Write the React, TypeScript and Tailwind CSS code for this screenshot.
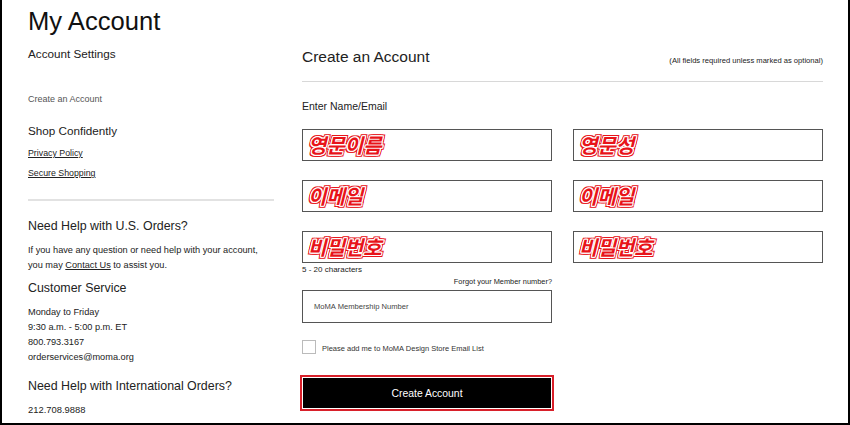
import { useState } from "react";

const koreanFieldClass =
  "inline-block -skew-x-[14deg] font-bold text-[20px] leading-none text-[#e8141a] [text-shadow:1px_0_0_#fff,-1px_0_0_#fff,0_1px_0_#fff,0_-1px_0_#fff,1px_1px_0_#fff,-1px_-1px_0_#fff,1px_-1px_0_#fff,-1px_1px_0_#fff,2px_0_0_#e8141a,-2px_0_0_#e8141a,0_2px_0_#e8141a,0_-2px_0_#e8141a,2px_2px_0_#e8141a,-2px_-2px_0_#e8141a,2px_-2px_0_#e8141a,-2px_2px_0_#e8141a]";

const Field = ({ label }: { label: string }) => (
  <div className="h-[32px] border border-[#555] bg-white flex items-center pl-[7px]">
    <span
      className={koreanFieldClass}
      style={{ fontFamily: '"Noto Sans CJK KR", "Noto Sans", sans-serif' }}
    >
      {label}
    </span>
  </div>
);

const App = () => {
  const [subscribe, setSubscribe] = useState(false);

  return (
    <div
      className="w-[850px] h-[425px] overflow-hidden bg-white border-l-2 border-r-2 border-b-2 border-black text-[#222]"
      style={{ fontFamily: '"Liberation Sans", Arial, sans-serif' }}
    >
      {/* Page title */}
      <div className="pt-[6px] pl-[26px]">
        <h1 className="text-[25.6px] leading-[30px] text-[#111]">My Account</h1>
      </div>

      <div className="flex pl-[26px] gap-[28px]">
        {/* Sidebar */}
        <aside className="w-[246px] flex flex-col">
          <h2 className="mt-[10px] text-[11.7px] leading-[16px]">Account Settings</h2>
          <p className="mt-[30px] text-[9px] leading-[14px] text-[#555]">Create an Account</p>

          <h3 className="mt-[17px] text-[11.7px] leading-[16px]">Shop Confidently</h3>
          <a href="#" className="mt-[8px] text-[8.8px] leading-[13px] underline">
            Privacy Policy
          </a>
          <a href="#" className="mt-[7px] text-[8.8px] leading-[13px] underline">
            Secure Shopping
          </a>

          <div className="mt-[19px] h-[2px] bg-[#e2e2e2]" />

          <h3 className="mt-[16px] text-[12.4px] leading-[18px]">Need Help with U.S. Orders?</h3>
          <p className="mt-[8px] text-[9.2px] leading-[15px]">
            If you have any question or need help with your account,
            <br />
            you may{" "}
            <a href="#" className="underline">
              Contact Us
            </a>{" "}
            to assist you.
          </p>

          <h3 className="mt-[6px] text-[12.4px] leading-[18px]">Customer Service</h3>
          <div className="mt-[8px] text-[9.2px] leading-[15px]">
            <p>Monday to Friday</p>
            <p>9:30 a.m. - 5:00 p.m. ET</p>
            <p>800.793.3167</p>
            <p>orderservices@moma.org</p>
          </div>

          <h3 className="mt-[12px] text-[12.4px] leading-[18px]">
            Need Help with International Orders?
          </h3>
          <p className="mt-[8px] text-[9.4px] leading-[14px]">212.708.9888</p>
        </aside>

        {/* Create account form */}
        <main className="w-[521px] flex flex-col">
          <div className="mt-[11px] flex justify-between items-start">
            <h2 className="text-[15.5px] leading-[20px]">Create an Account</h2>
            <span className="pt-[9px] text-[7.6px] leading-[10px]">
              (All fields required unless marked as optional)
            </span>
          </div>

          <div className="mt-[14px] h-px bg-[#d8d8d8]" />

          <p className="mt-[16px] text-[10.5px] leading-[16px]">Enter Name/Email</p>

          <div className="mt-[15px] grid grid-cols-2 gap-x-[21px] gap-y-[19px]">
            <Field label="영문이름" />
            <Field label="영문성" />
            <Field label="이메일" />
            <Field label="이메일" />
            <Field label="비밀번호" />
            <Field label="비밀번호" />
          </div>

          <div className="w-[250px] flex flex-col">
            <p className="mt-[2px] text-[8px] leading-[10px]">5 - 20 characters</p>
            <a href="#" className="mt-[2px] self-end text-[7.4px] leading-[10px]">
              Forgot your Member number?
            </a>
            <div className="mt-[3px] h-[33px] border border-[#555] flex items-center pl-[11px]">
              <span className="text-[7.6px] text-[#444]">MoMA Membership Number</span>
            </div>

            <label className="mt-[17px] flex items-center gap-[6px] cursor-pointer">
              <input
                type="checkbox"
                checked={subscribe}
                onChange={() => setSubscribe(!subscribe)}
                className="appearance-none w-[14px] h-[14px] border border-[#bbb] bg-white"
              />
              <span className="pt-[3px] text-[7.5px] text-[#333]">
                Please add me to MoMA Design Store Email List
              </span>
            </label>

            <div className="mt-[21px] -ml-[2px] w-[254px] h-[36px] border-2 border-[#d8202a] p-px">
              <button className="w-full h-full pt-[2px] bg-black text-white text-[10.4px]">
                Create Account
              </button>
            </div>
          </div>
        </main>
      </div>
    </div>
  );
};

export default App;
